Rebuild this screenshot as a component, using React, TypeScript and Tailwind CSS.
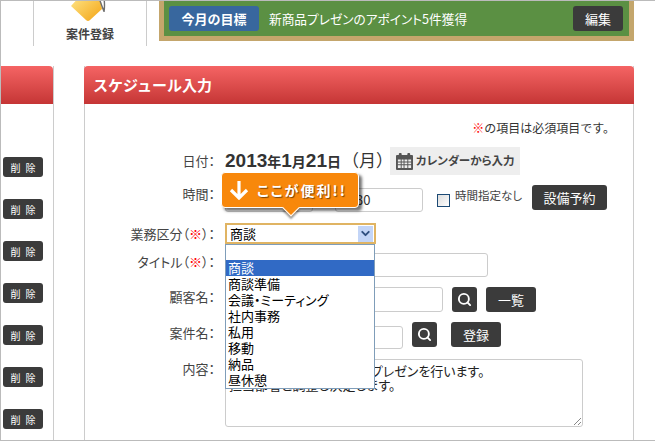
import React from 'react';
import { ChevronDown, Search } from 'lucide-react';

const font = "font-['Noto_Sans_CJK_JP','Noto_Sans',sans-serif]";
const options = ['商談', '商談準備', '会議・ミーティング', '社内事務', '私用', '移動', '納品', '昼休憩'];

const Req = () => <span className="text-[#f00]">※</span>;

const DarkButton = ({ className, children }: { className: string; children: React.ReactNode }) => (
  <button className={`flex items-center justify-center rounded-[3px] bg-[#3b3b3b] text-white ${className}`}>
    {children}
  </button>
);

const Row = ({
  label,
  className,
  labelClass = '',
  children,
}: {
  label: React.ReactNode;
  className: string;
  labelClass?: string;
  children?: React.ReactNode;
}) => (
  <div className={`flex items-center ${className}`}>
    <div className={`w-[130px] shrink-0 text-right text-[13px] text-[#444] ${labelClass}`}>{label}</div>
    <div className="ml-[10px] flex items-center">{children}</div>
  </div>
);

const Field = ({ className }: { className: string }) => (
  <div className={`rounded-[3px] border border-[#ccc] bg-white ${className}`} />
);

const SearchButton = () => (
  <DarkButton className="h-[25px] w-[25px]">
    <Search size={15} strokeWidth={3} />
  </DarkButton>
);

const Calendar = () => (
  <svg width="17" height="17" viewBox="0 0 18 18" fill="#555">
    <rect x="0" y="2" width="18" height="16" rx="1" />
    <rect x="3" y="0" width="3" height="5" rx="1" />
    <rect x="12" y="0" width="3" height="5" rx="1" />
    <path fill="#eee" d="M2 7h3v2H2zM6 7h2v2H6zM9 7h3v2H9zM13 7h3v2h-3zM2 10h3v2H2zM6 10h2v2H6zM9 10h3v2H9zM13 10h3v2h-3zM2 13h3v3H2zM6 13h2v3H6zM9 13h3v3H9zM13 13h3v3h-3z" />
  </svg>
);

const TagIcon = () => (
  <svg width="42" height="24" viewBox="0 0 42 24" className="absolute left-[34px] top-[-1px]">
    <defs>
      <linearGradient id="tag" x1="0" y1="0" x2="1" y2="1">
        <stop offset="0" stopColor="#ffe98e" />
        <stop offset="1" stopColor="#f3a312" />
      </linearGradient>
    </defs>
    <path d="M3 6 L18 20 Q20 22 22 20 L34 9 L32 -6 L14 -6 Z" fill="url(#tag)" />
    <path d="M31 -2 L35 9 Q37 14 35 8 M36 -2 Q37 6 36 12" fill="none" stroke="#6f6f6f" strokeWidth="1.4" />
  </svg>
);

export default function App() {
  return (
    <div className={`relative h-[441px] w-[655px] overflow-hidden border-y border-l border-[#bbb] bg-white [font-feature-settings:'palt'] ${font}`}>
      <div className="flex h-[45px]">
        <div className="relative ml-[32px] flex h-[45px] w-[114px] items-end justify-center border-x border-[#ccc] pb-[3px] text-[12px] font-bold text-[#444] [font-feature-settings:normal]">
          <TagIcon />
          案件登録
        </div>
        <div className="ml-[12px] flex h-[40px] w-[475px] items-center border-x-[5px] border-b-[5px] border-[#c4a66c] bg-[#5b9043] pl-[5px] pr-[6px] text-[13px] text-white">
          <div className="flex h-[25px] w-[90px] items-center justify-center rounded-[3px] bg-[#38679e] font-bold [font-feature-settings:normal]">今月の目標</div>
          <div className="ml-[10px] text-[12.7px]">新商品プレゼンのアポイント5件獲得</div>
          <DarkButton className="ml-auto h-[25px] w-[50px]">編集</DarkButton>
        </div>
      </div>

      <div className="mt-[20px] flex h-[374px]">
        <div className="w-[53px] border-r border-[#ccc]">
          <div className="h-[38px] rounded-tr-[4px] bg-gradient-to-b from-[#f56464] to-[#c53535]" />
          <div className="flex flex-col gap-[22px] pl-[2px] pt-[53px]">
            {Array.from({ length: 7 }).map((_, i) => (
              <DarkButton key={i} className="h-[20px] w-[40px] pl-[5px] text-[10px] tracking-[5px]">削除</DarkButton>
            ))}
          </div>
        </div>

        <div className="ml-[30px] w-[550px] border-x border-[#ccc]">
          <div className="-mx-px flex h-[38px] items-center rounded-t-[4px] bg-gradient-to-b from-[#f56464] to-[#c53535] pl-[9px] text-[15px] font-bold text-white [font-feature-settings:normal]">
            スケジュール入力
          </div>
          <div className="mt-[15px] pr-[18px] text-right text-[12px] text-[#333] [font-feature-settings:normal]"><Req />の項目は必須項目です。</div>
          <Row label="日付：" className="mt-[10px] h-[28px]">
            <span className="flex w-[165px] items-baseline font-['Liberation_Sans',sans-serif] text-[19px] font-bold text-[#333]">
              2013<span className={`text-[14px] ${font}`}>年</span>1<span className={`text-[14px] ${font}`}>月</span>21<span className={`text-[14px] ${font}`}>日</span><span className={`ml-[1px] text-[17px] font-normal [font-feature-settings:normal] ${font}`}>（月）</span>
            </span>
            <div className="flex h-[28px] w-[130px] items-center bg-[#eee] pl-[6px] text-[11.5px] font-bold text-[#444]">
              <Calendar />
              <span className="ml-[3px] whitespace-nowrap">カレンダーから入力</span>
            </div>
          </Row>
          <Row label="時間：" labelClass="pb-[12px]" className="mt-[13px] h-[24px]">
            <Field className="h-[24px] w-[88px]" />
            <div className="ml-[22px] flex h-[24px] w-[88px] items-center rounded-[3px] border border-[#ccc] pl-[2px] text-[13px] text-[#333]">10:30</div>
            <div className="ml-[14px] h-[13px] w-[13px] border border-[#1c4a75] bg-gradient-to-br from-[#ddd] to-white" />
            <span className="mb-[8px] ml-[5px] w-[67px] whitespace-nowrap text-[11.5px] text-[#444]">時間指定なし</span>
            <DarkButton className="mb-[5px] ml-[10px] h-[25px] w-[75px] text-[13px]">設備予約</DarkButton>
          </Row>
          <Row label={<>業務区分（<Req />）：</>} className="mt-[11px] h-[21px]">
            <div className="flex h-[21px] w-[151px] items-center justify-between border-2 border-[#e0b463] pl-[3px] pr-[1px] text-[13px] text-black">
              商談
              <div className="flex h-[16px] w-[15px] items-center justify-center bg-[#c3d5f7] text-[#2f4f80]">
                <ChevronDown size={13} strokeWidth={3.5} />
              </div>
            </div>
          </Row>
          <Row label={<>タイトル（<Req />）：</>} labelClass="pb-[6px]" className="mt-[9px] h-[24px]">
            <Field className="h-[24px] w-[263px]" />
          </Row>
          <Row label="顧客名：" labelClass="pb-[6px]" className="mt-[10px] h-[25px]">
            <Field className="h-[25px] w-[218px]" />
            <div className="ml-[9px]"><SearchButton /></div>
            <DarkButton className="ml-[9px] h-[25px] w-[50px] text-[13px]">一覧</DarkButton>
          </Row>
          <Row label="案件名：" labelClass="pb-[4px]" className="mt-[10px] h-[25px]">
            <Field className="mt-[5px] h-[23px] w-[178px]" />
            <div className="ml-[9px]"><SearchButton /></div>
            <DarkButton className="ml-[14px] h-[25px] w-[50px] text-[13px]">登録</DarkButton>
          </Row>
          <div className="mt-[12px] flex">
            <div className="w-[130px] text-right text-[13px] text-[#444]">内容：</div>
            <div className="relative ml-[10px] h-[68px] w-[358px] rounded-[3px] border border-[#ccc] pl-[3px] pt-[4px] text-[13px] leading-[14px] text-[#222]">
              <div className="whitespace-nowrap">得意先様向けに新商品のプレゼンを行います。</div>
              <div className="whitespace-nowrap">担当部署と調整し決定します。</div>
              <svg width="9" height="9" viewBox="0 0 9 9" className="absolute bottom-0 right-0">
                <path d="M1 8 L8 1 M5 8 L8 5" stroke="#888" fill="none" />
              </svg>
            </div>
          </div>
        </div>
      </div>

      {/* dropdown list */}
      <div className="absolute left-[224px] top-[243px] h-[145px] w-[150px] border border-[#7f9db9] bg-white pt-[15px] text-[13px] leading-[16px] text-black">
        {options.map((o, i) => (
          <div key={o} className={`pl-[2px] ${i === 0 ? 'bg-[#316ac5] text-white' : ''}`}>{o}</div>
        ))}
      </div>

      {/* tooltip */}
      <div className="absolute left-[220px] top-[171px] flex h-[36px] w-[138px] items-center rounded-[4px] border border-white bg-[#f8880b] pl-[7px] text-[14px] font-bold tracking-[2px] text-white shadow-[3px_3px_3px_rgba(0,0,0,0.55)]">
        <svg width="20" height="20" viewBox="0 0 20 20" fill="none" stroke="white" strokeWidth="3.2">
          <path d="M10 1v17M2 10l8 8 8-8" />
        </svg>
        <span className="relative ml-[8px] whitespace-nowrap [text-shadow:1px_1px_1px_rgba(0,0,0,0.5)]">ここが便利!!</span>
        <div className="absolute bottom-[-7px] left-[63px] h-[12px] w-[12px] rotate-45 border-b border-r border-white bg-[#f8880b] shadow-[2px_2px_2px_rgba(0,0,0,0.4)]" />
      </div>
    </div>
  );
}
